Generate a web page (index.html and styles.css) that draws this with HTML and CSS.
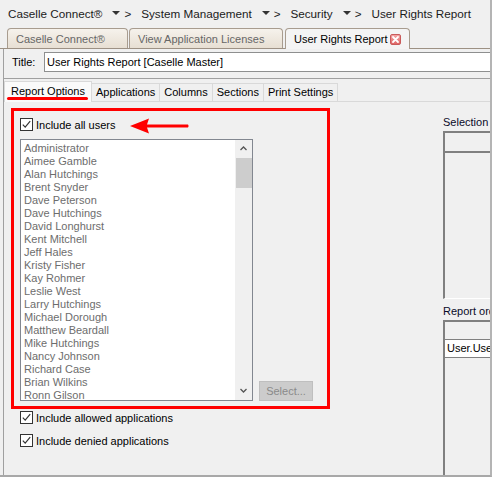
FILE: index.html
```html
<!DOCTYPE html>
<html lang="en">
<head>
  <meta charset="UTF-8" />
  <title>User Rights Report</title>
  <link rel="stylesheet" href="styles.css">
</head>
<body>
  <div class="window">
    <div class="crumbs">
      <span>Caselle Connect®</span><span class="sep"><i class="drop"></i>&gt;</span>
      <span>System Management</span><span class="sep"><i class="drop"></i>&gt;</span>
      <span>Security</span><span class="sep"><i class="drop"></i>&gt;</span>
      <span>User Rights Report</span>
    </div>

    <div class="doc-tabs">
      <div class="doc-tab">Caselle Connect®</div>
      <div class="doc-tab">View Application Licenses</div>
      <div class="doc-tab active">User Rights Report
        <span class="close">
          <svg width="11" height="11" viewBox="0 0 11 11"><path d="M3 3 L8 8 M8 3 L3 8" stroke="#fff" stroke-width="1.8" stroke-linecap="round"/></svg>
        </span>
      </div>
    </div>

    <div class="doc">
      <div class="title-row">
        <label>Title:</label>
        <div class="field">User Rights Report [Caselle Master]</div>
      </div>

      <div class="sub-tabs">
        <div class="sub-tab active">Report Options</div>
        <div class="sub-tab">Applications</div>
        <div class="sub-tab">Columns</div>
        <div class="sub-tab">Sections</div>
        <div class="sub-tab">Print Settings</div>
      </div>

      <div class="page">
        <div class="left">
          <label class="check">
            <svg class="box" width="13" height="13" viewBox="0 0 13 13"><rect x="0.5" y="0.5" width="12" height="12" fill="#fff" stroke="#333"/><path d="M2.8 6.6 L5.2 9.2 L10.2 3.2" fill="none" stroke="#333" stroke-width="1.2"/></svg>
            Include all users
          </label>

          <div class="list-row">
            <div class="listbox">
              <ul class="items">
                <li>Administrator</li>
                <li>Aimee Gamble</li>
                <li>Alan Hutchings</li>
                <li>Brent Snyder</li>
                <li>Dave Peterson</li>
                <li>Dave Hutchings</li>
                <li>David Longhurst</li>
                <li>Kent Mitchell</li>
                <li>Jeff Hales</li>
                <li>Kristy Fisher</li>
                <li>Kay Rohmer</li>
                <li>Leslie West</li>
                <li>Larry Hutchings</li>
                <li>Michael Dorough</li>
                <li>Matthew Beardall</li>
                <li>Mike Hutchings</li>
                <li>Nancy Johnson</li>
                <li>Richard Case</li>
                <li>Brian Wilkins</li>
                <li>Ronn Gilson</li>
              </ul>
              <div class="scroll">
                <svg width="17" height="17" viewBox="0 0 17 17"><path d="M5.5 10 L8.5 7 L11.5 10" fill="none" stroke="#555" stroke-width="1.3"/></svg>
                <div class="thumb"></div>
                <div class="track"></div>
                <svg width="17" height="17" viewBox="0 0 17 17"><path d="M5.5 6 L8.5 9 L11.5 6" fill="none" stroke="#555" stroke-width="1.3"/></svg>
              </div>
            </div>
            <button class="select-btn" disabled>Select...</button>
          </div>

          <label class="check allowed">
            <svg class="box" width="13" height="13" viewBox="0 0 13 13"><rect x="0.5" y="0.5" width="12" height="12" fill="#fff" stroke="#333"/><path d="M2.8 6.6 L5.2 9.2 L10.2 3.2" fill="none" stroke="#333" stroke-width="1.2"/></svg>
            Include allowed applications
          </label>
          <label class="check denied">
            <svg class="box" width="13" height="13" viewBox="0 0 13 13"><rect x="0.5" y="0.5" width="12" height="12" fill="#fff" stroke="#333"/><path d="M2.8 6.6 L5.2 9.2 L10.2 3.2" fill="none" stroke="#333" stroke-width="1.2"/></svg>
            Include denied applications
          </label>
        </div>

        <div class="right">
          <div class="cap">Selection criteria</div>
          <div class="grid grid-sel">
            <div class="grid-head"></div>
          </div>
          <div class="cap">Report order</div>
          <div class="grid grid-order">
            <div class="grid-head"></div>
            <div class="grid-row">User.UserName</div>
          </div>
        </div>
      </div>
    </div>

    <!-- red annotations drawn over the screen -->
    <div class="note-line"></div>
    <div class="note-box"></div>
    <svg class="note-arrow" width="62" height="20" viewBox="0 0 62 20">
      <path d="M2 10 L21 2.5 L19 8.6 L60 8.6 Q61.3 10 60 11.4 L19 11.4 L21 17.5 Z" fill="#f00"/>
    </svg>
  </div>
</body>
</html>
```

FILE: styles.css
```css
body {
  margin: 0;
  font-family: "Liberation Sans", Arial, sans-serif;
  font-size: 11px;
  color: #000;
  background: #f0f0f0;
}

.window {
  position: relative;
  width: 492px;
  height: 477px;
  box-sizing: border-box;
  border-right: 2px solid #b4b4b4;
  border-bottom: 2px solid #a8a8a8;
  background: #f0f0f0;
  overflow: hidden;
}

/* breadcrumb bar */
.crumbs {
  height: 26px;
  display: flex;
  align-items: center;
  padding-left: 8px;
  font-size: 11.7px;
  color: #1b1b1b;
  white-space: nowrap;
}

.crumbs .sep {
  display: inline-flex;
  align-items: center;
  margin: 0 10px;
}

.drop {
  display: inline-block;
  width: 0;
  height: 0;
  border-left: 4px solid transparent;
  border-right: 4px solid transparent;
  border-top: 4px solid #333;
  margin-right: 4px;
}

/* document tabs */
.doc-tabs {
  height: 23px;
  box-sizing: border-box;
  padding: 2px 0 0 7px;
  display: flex;
  align-items: flex-end;
  gap: 1px;
  border-bottom: 1px solid #9d9184;
}

.doc-tab {
  height: 20px;
  box-sizing: border-box;
  padding: 0 8px;
  display: flex;
  align-items: center;
  border: 1px solid #a89c8f;
  border-bottom: none;
  border-radius: 4px 4px 0 0;
  background: linear-gradient(#f6f2ec, #e7dfd3);
  color: #666;
  white-space: nowrap;
}

.doc-tab:nth-child(1) { width: 121px; }
.doc-tab:nth-child(2) { width: 154px; }

.doc-tab.active {
  width: 125px;
  height: 21px;
  margin-bottom: -1px;
  margin-left: 1px;
  background: #f4f4f4;
  color: #000;
}

.close {
  display: inline-block;
  width: 11px;
  height: 11px;
  margin-left: auto;
  box-sizing: border-box;
  border: 1px solid #c95b5b;
  border-radius: 2px;
  background: linear-gradient(#f3a3a3, #e06868);
}

.close svg {
  display: block;
  margin: -1px;
}

/* document body */
.doc {
  margin-left: 3px;
  border-left: 1px solid #a0a0a0;
  height: 100%;
}

.title-row {
  height: 30px;
  box-sizing: border-box;
  padding: 3px 0 0 8px;
  display: flex;
  border-bottom: 1px solid #a0a0a0;
}

.title-row label {
  width: 32px;
  line-height: 20px;
}

.field {
  flex: 1;
  height: 20px;
  box-sizing: border-box;
  padding-left: 2px;
  line-height: 18px;
  background: #fff;
  border: 1px solid #8e8f8f;
  border-right: none;
}

/* inner tabs */
.sub-tabs {
  height: 23px;
  box-sizing: border-box;
  padding-left: 1px;
  display: flex;
  align-items: flex-end;
  border-bottom: 1px solid #d9d9d9;
}

.sub-tab {
  height: 18px;
  box-sizing: border-box;
  padding: 0 4px;
  line-height: 17px;
  border: 1px solid #d9d9d9;
  border-bottom: none;
  margin-left: -1px;
  white-space: nowrap;
}

.sub-tab.active {
  height: 21px;
  margin-bottom: -1px;
  padding: 0 6px;
  line-height: 19px;
  background: #fafafa;
}

/* page content */
.page {
  display: flex;
  padding: 16px 0 0 16px;
}

.left {
  width: 293px;
  flex: none;
}

.check {
  display: flex;
  align-items: center;
  height: 13px;
  gap: 3px;
  white-space: nowrap;
}

.check .box {
  flex: none;
}

.check.allowed { margin-top: 10px; }
.check.denied { margin-top: 10px; }

.list-row {
  margin-top: 8px;
  display: flex;
  align-items: flex-end;
  gap: 6px;
}

.listbox {
  width: 233px;
  height: 262px;
  box-sizing: border-box;
  border: 1px solid #828790;
  background: #fff;
  display: flex;
}

.items {
  flex: 1;
  margin: 0;
  padding: 2px 0 0 3px;
  list-style: none;
  color: #6d6d6d;
}

.items li {
  height: 13px;
  line-height: 13px;
  white-space: nowrap;
}

.scroll {
  width: 17px;
  display: flex;
  flex-direction: column;
  background: #f0f0f0;
}

.scroll svg {
  display: block;
  flex: none;
}

.thumb {
  height: 30px;
  margin: 1px 0 0 1px;
  background: #cdcdcd;
}

.track {
  flex: 1;
}

.select-btn {
  width: 54px;
  height: 20px;
  padding: 0;
  font-family: inherit;
  font-size: 11px;
  color: #8a8a8a;
  background: #cccccc;
  border: 1px solid #bfbfbf;
}

.right {
  margin: -2px 0 0 130px;
  flex: 1;
  overflow: hidden;
}

.cap {
  height: 13px;
  line-height: 13px;
  white-space: nowrap;
  color: #0a0a28;
}

.grid {
  width: 120px;
  margin-top: 2px;
  box-sizing: border-box;
  border-left: 2px solid #808080;
  border-top: 2px solid #808080;
}

.grid-sel {
  height: 168px;
  margin-bottom: 6px;
  border-bottom: 1px solid #fff;
}

.grid-sel .grid-head {
  height: 18px;
  border-bottom: 2px solid #808080;
}

.grid-order {
  height: 160px;
}

.grid-order .grid-head {
  height: 17px;
}

.grid-row {
  height: 19px;
  box-sizing: border-box;
  padding-left: 2px;
  line-height: 17px;
  background: #fff;
  border-top: 1px solid #808080;
  border-bottom: 1px solid #808080;
  white-space: nowrap;
}

/* annotations */
.note-box {
  position: absolute;
  left: 11px;
  top: 108px;
  width: 319px;
  height: 301px;
  box-sizing: border-box;
  border: 3px solid #f00;
}

.note-line {
  position: absolute;
  left: 7px;
  top: 97px;
  width: 81px;
  height: 3px;
  border-radius: 2px;
  background: #f00;
}

.note-arrow {
  position: absolute;
  left: 128px;
  top: 116px;
}
```
